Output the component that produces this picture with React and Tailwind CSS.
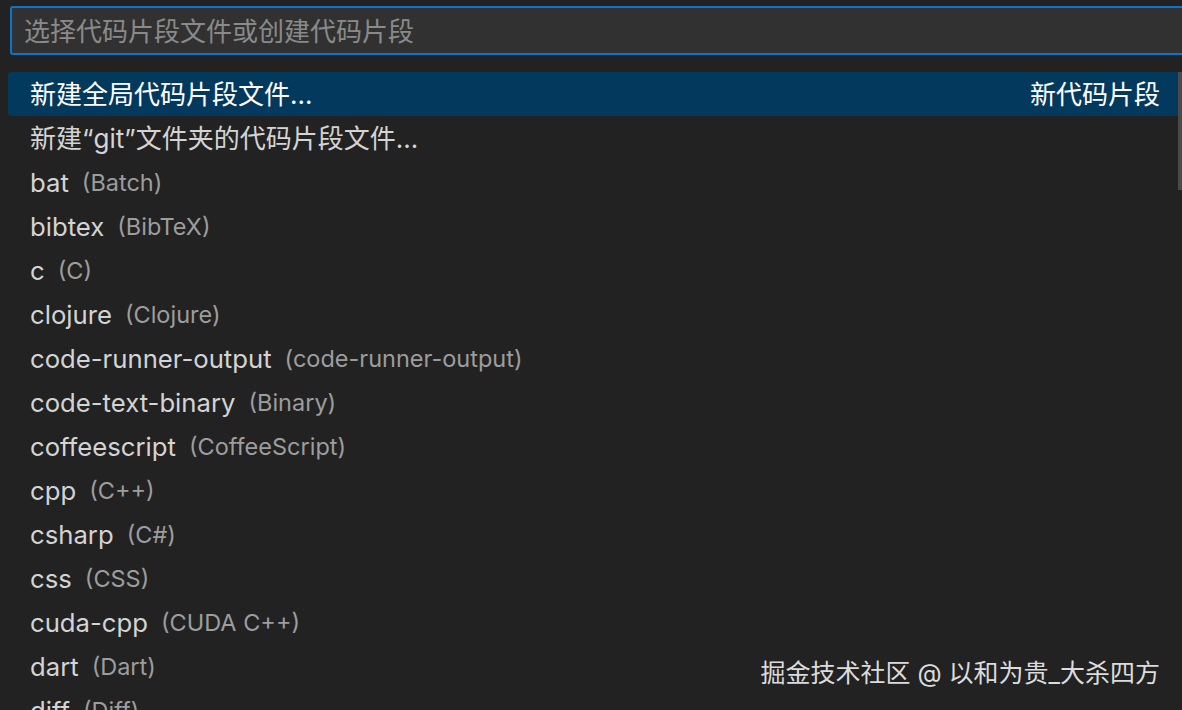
import React from 'react';

const items = [
  { label: 'bat', desc: 'Batch' },
  { label: 'bibtex', desc: 'BibTeX' },
  { label: 'c', desc: 'C' },
  { label: 'clojure', desc: 'Clojure' },
  { label: 'code-runner-output', desc: 'code-runner-output' },
  { label: 'code-text-binary', desc: 'Binary' },
  { label: 'coffeescript', desc: 'CoffeeScript' },
  { label: 'cpp', desc: 'C++' },
  { label: 'csharp', desc: 'C#' },
  { label: 'css', desc: 'CSS' },
  { label: 'cuda-cpp', desc: 'CUDA C++' },
  { label: 'dart', desc: 'Dart' },
  { label: 'diff', desc: 'Diff' },
];

const font = { fontFamily: 'Inter, "Noto Sans CJK SC", sans-serif' };

const App = () => {
  return (
    <div
      className="relative w-[1182px] h-[710px] overflow-hidden bg-[#222222] antialiased"
      style={font}
    >
      <div className="pl-[10px] pt-[6px]">
        <div className="h-[49px] -mr-[10px] rounded-[3px] border-2 border-[#0f74c9] bg-[#313131] flex items-center pl-[12px] pt-[3px]">
          <span className="text-[26px] leading-none text-[#8a8a8a]">选择代码片段文件或创建代码片段</span>
        </div>
      </div>

      <div className="relative mt-[17px] pl-[8px] pr-[4px]">
        <div className="h-[44px] rounded-l-[4px] bg-[#04395e] flex items-center justify-between pl-[22px] pr-[18px] pt-[2px]">
          <span className="text-[26px] leading-none text-white">新建全局代码片段文件...</span>
          <span className="text-[26px] leading-none text-white">新代码片段</span>
        </div>
        <div className="h-[44px] flex items-center pl-[22px] pt-[2px]">
          <span className="text-[26px] leading-none text-[#d4d4d4]">新建“git”文件夹的代码片段文件...</span>
        </div>
        {items.map((item) => (
          <div key={item.label} className="h-[44px] flex items-center pl-[22px] pt-[2px] whitespace-nowrap">
            <span className="text-[25.7px] leading-none text-[#d4d4d4]">{item.label}</span>
            <span className="ml-[13px] text-[23.5px] leading-none text-[#9d9d9d]">({item.desc})</span>
          </div>
        ))}
        <div className="absolute right-0 top-0 w-[4px] h-[118px] bg-[#4a4a4a]" />
      </div>

      <div className="absolute right-[22px] top-[661px] text-[25px] leading-none text-[#dcdcdc] whitespace-nowrap">
        掘金技术社区 @ 以和为贵_大杀四方
      </div>
    </div>
  );
};

export default App;
